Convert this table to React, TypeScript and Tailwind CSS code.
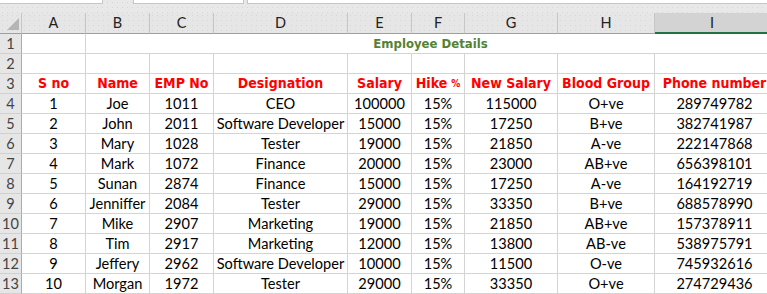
import React from "react";

const cols = ["A", "B", "C", "D", "E", "F", "G", "H", "I"];

const employees = [
  ["1", "Joe", "1011", "CEO", "100000", "15%", "115000", "O+ve", "289749782"],
  ["2", "John", "2011", "Software Developer", "15000", "15%", "17250", "B+ve", "382741987"],
  ["3", "Mary", "1028", "Tester", "19000", "15%", "21850", "A-ve", "222147868"],
  ["4", "Mark", "1072", "Finance", "20000", "15%", "23000", "AB+ve", "656398101"],
  ["5", "Sunan", "2874", "Finance", "15000", "15%", "17250", "A-ve", "164192719"],
  ["6", "Jenniffer", "2084", "Tester", "29000", "15%", "33350", "B+ve", "688578990"],
  ["7", "Mike", "2907", "Marketing", "19000", "15%", "21850", "AB+ve", "157378911"],
  ["8", "Tim", "2917", "Marketing", "12000", "15%", "13800", "AB-ve", "538975791"],
  ["9", "Jeffery", "2962", "Software Developer", "10000", "15%", "11500", "O-ve", "745932616"],
  ["10", "Morgan", "1972", "Tester", "29000", "15%", "33350", "O+ve", "274729436"],
];

const headers = ["S no", "Name", "EMP No", "Designation", "Salary", "Hike", "New Salary", "Blood Group", "Phone number"];

const dots = "bg-[radial-gradient(#d6d6d6_0.7px,transparent_0.8px)] bg-[size:5px_5px]";

function RowHead({ n }: { n: number }) {
  return (
    <div className="flex items-center justify-center border-r border-b border-r-[#ababab] border-b-[#d0d0d0] bg-[#e6e6e6] text-[14.5px] text-[#444]">
      {n}
    </div>
  );
}

function Cell({ children, className = "" }: { children?: React.ReactNode; className?: string }) {
  return (
    <div className={`flex items-center justify-center overflow-hidden whitespace-nowrap border-r border-b border-[#d4d4d4] ${className}`}>
      {children}
    </div>
  );
}

export default function App() {
  return (
    <div className="h-[294px] w-[767px] overflow-hidden bg-white font-['Lato','Liberation_Sans',sans-serif]">
      {/* formula bar remains */}
      <div className={`flex h-[13px] bg-[#e8e8e8] ${dots}`}>
        <div className="h-[4px] w-[103px] border-r border-b border-[#c6c6c6] bg-white" />
        <div className="ml-[30px] h-[4px] w-[111px] border-x border-b border-[#c6c6c6] bg-white" />
        <div className="ml-[3px] h-[4px] flex-1 border-l border-b border-[#c6c6c6] bg-white" />
      </div>

      <div className="grid grid-cols-[22px_64px_64px_64px_134px_64px_53px_93px_97px_120px] grid-rows-[21px] auto-rows-[20px] text-[14.6px] text-black">
        {/* column headers */}
        <div className={`relative border-r border-b border-r-[#c6c6c6] border-b-[#9e9e9e] bg-[#e6e6e6] ${dots}`}>
          <svg className="absolute left-[7px] top-[5px]" width="12" height="12" viewBox="0 0 12 12">
            <polygon points="12,0 12,12 0,12" fill="#b5b5b5" />
          </svg>
        </div>
        {cols.map((c) => (
          <div
            key={c}
            className={
              c === "I"
                ? "flex items-center justify-center border-b-2 border-b-[#217346] bg-[#d3d3d3] pr-[6px] text-[14.5px] text-[#222]"
                : `flex items-center justify-center border-r border-b border-r-[#c6c6c6] border-b-[#9e9e9e] bg-[#e6e6e6] text-[14.5px] text-[#222] ${dots}`
            }
          >
            {c}
          </div>
        ))}

        {/* row 1: title */}
        <RowHead n={1} />
        <Cell />
        <div className="col-span-8 flex items-center justify-center border-b border-[#d4d4d4] pt-[1px] font-['DejaVu_Sans_Condensed','DejaVu_Sans',sans-serif] text-[13px] font-bold text-[#548235]">
          Employee Details
        </div>

        {/* row 2 */}
        <RowHead n={2} />
        {cols.map((c) => (
          <Cell key={c} />
        ))}

        {/* row 3: headings */}
        <RowHead n={3} />
        {headers.map((h) => (
          <Cell key={h} className="font-['DejaVu_Sans_Condensed','DejaVu_Sans',sans-serif] text-[14px] font-bold text-[#ff0000]">
            {h}
            {h === "Hike" && <span className="ml-[4px] text-[10px]">%</span>}
          </Cell>
        ))}

        {/* data */}
        {employees.map((row, i) => (
          <React.Fragment key={row[0]}>
            <RowHead n={i + 4} />
            {row.map((v, j) => (
              <Cell key={j}>{v}</Cell>
            ))}
          </React.Fragment>
        ))}
      </div>
    </div>
  );
}
